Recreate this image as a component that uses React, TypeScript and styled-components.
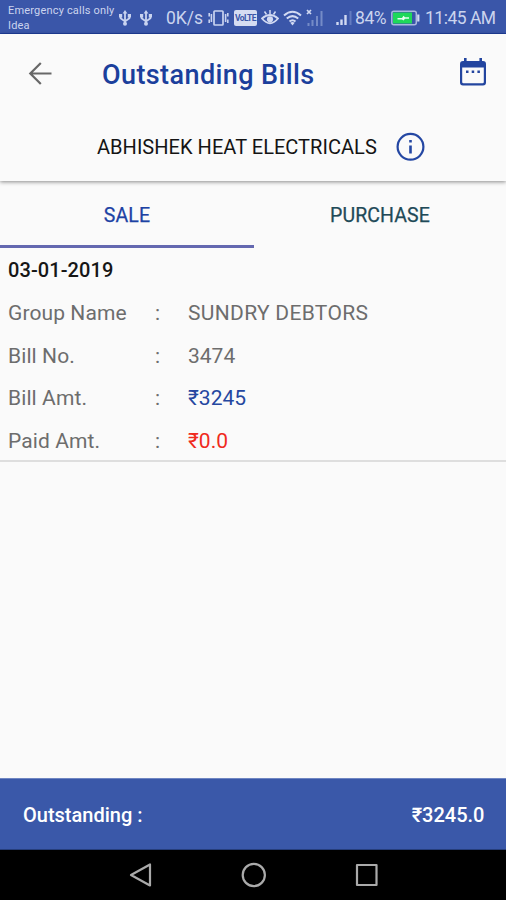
import React from "react";
import styled, { createGlobalStyle } from "styled-components";

const GlobalStyle = createGlobalStyle`
  * { box-sizing: border-box; }
  body { margin: 0; background: #fafafa; font-family: Roboto, "Liberation Sans", sans-serif; }
`;

const Screen = styled.div`
  width: 506px;
  height: 900px;
  display: flex;
  flex-direction: column;
  overflow: hidden;
  background: #fafafa;
`;

const StatusBar = styled.header`
  flex: none;
  height: 34px;
  display: flex;
  align-items: center;
  padding-left: 8px;
  background: #3a56a9;
  border-bottom: 1px solid #1f3f9d;
  color: #cbd4ee;
`;

const Carrier = styled.div`
  width: 111px;
  flex: none;
  padding-top: 2px;
  font-size: 11px;
  line-height: 15px;
  letter-spacing: 0.18px;
  white-space: nowrap;
`;

const StatusItem = styled.div<{ $w: number; $gap?: number }>`
  flex: none;
  width: ${(p) => p.$w}px;
  margin-left: ${(p) => p.$gap ?? 0}px;
  padding-top: 2px;
  display: flex;
  svg { display: block; }
`;

const StatusText = styled.div<{ $w: number; $gap: number; $track?: number }>`
  flex: none;
  width: ${(p) => p.$w}px;
  margin-left: ${(p) => p.$gap}px;
  padding-top: 2px;
  font-size: 17.5px;
  letter-spacing: ${(p) => p.$track ?? 0}px;
  line-height: 22px;
  white-space: nowrap;
`;

const AppBar = styled.div`
  flex: none;
  height: 147px;
  background: #fafafa;
  box-shadow: 0 1px 4px rgba(0, 0, 0, 0.45);
`;

const TitleRow = styled.div`
  height: 80px;
  display: flex;
  align-items: center;
  padding: 0 18px 0 26px;
`;

const IconButton = styled.button<{ $lift?: number }>`
  flex: none;
  border: 0;
  padding: 0;
  margin-bottom: ${(p) => p.$lift ?? 0}px;
  background: none;
  display: flex;
`;

const Title = styled.h1`
  flex: 1;
  margin: 2px 0 0 48px;
  font-size: 27px;
  font-weight: 500;
  line-height: 32px;
  letter-spacing: 0.4px;
  color: #1b3f9c;
`;

const PartyRow = styled.div`
  height: 66px;
  display: flex;
  align-items: center;
  padding-left: 97px;
`;

const PartyName = styled.span`
  width: 297px;
  font-size: 20px;
  line-height: 24px;
  letter-spacing: 0.04px;
  color: #141414;
  white-space: nowrap;
`;

const Tabs = styled.nav`
  flex: none;
  height: 67px;
  display: grid;
  grid-template-columns: 254px 252px;
`;

const Tab = styled.div<{ $active?: boolean }>`
  display: flex;
  align-items: center;
  justify-content: center;
  border-bottom: 3px solid ${(p) => (p.$active ? "#6468b0" : "transparent")};
  padding-top: 4px;
  font-size: 19.5px;
  letter-spacing: 0.1px;
  color: ${(p) => (p.$active ? "#1d42a4" : "#1f4a58")};
  -webkit-text-stroke: 0.25px currentColor;
`;

const Bill = styled.section`
  flex: none;
  height: 214px;
  padding: 1px 8px 0;
  border-bottom: 2px solid #dedede;
`;

const BillDate = styled.div`
  height: 43px;
  line-height: 43px;
  font-size: 20px;
  font-weight: 500;
  letter-spacing: 0.08px;
  color: #161616;
`;

const Field = styled.div`
  height: 42.6px;
  display: grid;
  grid-template-columns: 147px 33px 1fr;
  line-height: 42px;
  font-size: 21px;
  color: #6d6d6d;
`;

const Label = styled.span`
  letter-spacing: 0.1px;
`;

const Value = styled.span<{ $color?: string; $track?: number }>`
  color: ${(p) => p.$color ?? "inherit"};
  letter-spacing: ${(p) => p.$track ?? 0}px;
`;

const Space = styled.div`
  flex: 1;
`;

const Total = styled.footer`
  flex: none;
  height: 72px;
  display: flex;
  align-items: center;
  justify-content: space-between;
  padding: 1px 21.5px 0 23px;
  background: #3a58a9;
  border-top: 1px solid #6f86c2;
  border-bottom: 1px solid #263e7c;
  color: #fff;
  font-size: 20px;
  font-weight: 500;
`;

const NavBar = styled.nav`
  flex: none;
  height: 50px;
  display: flex;
  justify-content: center;
  align-items: center;
  gap: 88px;
  padding-left: 2px;
  background: #000;
`;

const Usb = () => (
  <svg width="12" height="16" viewBox="0 0 12 16" fill="none" stroke="#c9d3f0" strokeWidth="1.8">
    <path d="M6 2v12M1.6 5v3.2L6 11.4l4.4-3.2V5" />
    <path d="M6 0l2.4 3.4H3.6z" fill="#c9d3f0" stroke="none" />
    <circle cx="6" cy="13.8" r="2" fill="#c9d3f0" stroke="none" />
    <path d="M0 4h3.2v3.4H0zM8.8 4H12v3.4H8.8z" fill="#c9d3f0" stroke="none" />
  </svg>
);

const Vibrate = () => (
  <svg width="21" height="16" viewBox="0 0 21 16" fill="none" stroke="#c9d3f0" strokeWidth="1.7">
    <rect x="6" y="1" width="9" height="14" rx="0.8" />
    <path d="M3.4 4v8M1.2 3v3.4M1.2 9.600v3.400M17.600 4v8M19.800 3v3.400M19.800 9.600v3.400" strokeWidth="1.6" />
  </svg>
);

const Badge = styled.span`
  width: 23px;
  height: 16px;
  border-radius: 2px;
  background: #d5dcf2;
  color: #3a56a9;
  font-size: 8.5px;
  font-weight: 700;
  line-height: 16px;
  letter-spacing: -0.6px;
  text-align: center;
`;

const Eye = () => (
  <svg width="18" height="17" viewBox="0 0 18 17" fill="none" stroke="#d2daf3" strokeWidth="1.8">
    <path d="M1 9.5Q9 2.500 17 9.500Q9 19 1 9.500z" />
    <circle cx="9" cy="10.3" r="3.1" fill="#d2daf3" stroke="none" />
    <path d="M9 1v4M3.500 2.500l2 3M14.500 2.500l-2 3" strokeWidth="1.5" />
  </svg>
);

const Wifi = () => (
  <svg width="19" height="16" viewBox="0 0 19 16" fill="none" stroke="#d2daf3" strokeWidth="2">
    <path d="M1 5.500Q9.500-2 18 5.500M3.800 8.600Q9.500 3.600 15.200 8.600M6.500 11.500Q9.500 9 12.500 11.500" />
    <path d="M9.500 15.500l-2.200-2.700q2.200-1.600 4.400 0z" fill="#d2daf3" stroke="none" />
  </svg>
);

const NoSignal = () => (
  <svg width="18" height="18" viewBox="0 0 18 18" fill="none">
    <path d="M1 1l4 4M5 1L1 5" stroke="#d2daf3" strokeWidth="1.7" />
    <path d="M2.500 17v-3M6.500 17v-6M11 17V7M15.500 17V2" stroke="#758bc7" strokeWidth="2" />
  </svg>
);

const Signal = () => (
  <svg width="17" height="16" viewBox="0 0 17 16" fill="none" strokeWidth="2.4">
    <path d="M1.500 15v-3M5.500 15V9.500M9.500 15V5" stroke="#d2daf3" />
    <path d="M14.500 15V1" stroke="#647cc0" strokeWidth="2" />
  </svg>
);

const Battery = () => (
  <svg width="29" height="16" viewBox="0 0 29 16" fill="none">
    <rect x="0.8" y="1.3" width="24.5" height="13.4" rx="2" stroke="#a9b7df" strokeWidth="1.5" />
    <rect x="2" y="2.5" width="19" height="11" fill="#1ed85a" />
    <path d="M6.500 8h4.500l1.500-2.200 1.500 1.400h4v1.600h-4l-1.500 1.800-1.500-1.200H6.500z" fill="#e5fff0" />
    <path d="M27.300 4.500v7" stroke="#d2daf3" strokeWidth="2.2" />
  </svg>
);

const fields = [
  { label: "Group Name", value: "SUNDRY DEBTORS", track: 0.32 },
  { label: "Bill No.", value: "3474" },
  { label: "Bill Amt.", value: "₹3245", color: "#2547a0" },
  { label: "Paid Amt.", value: "₹0.0", color: "#f02a1d" },
];

export default function App() {
  return (
    <Screen>
      <GlobalStyle />
      <StatusBar>
        <Carrier>Emergency calls only<br />Idea</Carrier>
        <StatusItem $w={12}><Usb /></StatusItem>
        <StatusItem $w={12} $gap={9}><Usb /></StatusItem>
        <StatusText $w={38} $gap={14}>0K/s</StatusText>
        <StatusItem $w={21} $gap={4}><Vibrate /></StatusItem>
        <StatusItem $w={23} $gap={5}><Badge>VoLTE</Badge></StatusItem>
        <StatusItem $w={18} $gap={4}><Eye /></StatusItem>
        <StatusItem $w={19} $gap={4}><Wifi /></StatusItem>
        <StatusItem $w={18} $gap={4}><NoSignal /></StatusItem>
        <StatusItem $w={17} $gap={12}><Signal /></StatusItem>
        <StatusText $w={34} $gap={2} $track={-0.4}>84%</StatusText>
        <StatusItem $w={29} $gap={2}><Battery /></StatusItem>
        <StatusText $w={76} $gap={5} $track={-0.5}>11:45 AM</StatusText>
      </StatusBar>

      <AppBar>
        <TitleRow>
          <IconButton aria-label="Back">
            <svg width="28" height="28" viewBox="0 0 28 28" fill="none" stroke="#686868" strokeWidth="2.2">
              <path d="M25.500 13.500H4.500M14.800 3L4.300 13.500 14.800 24" />
            </svg>
          </IconButton>
          <Title>Outstanding Bills</Title>
          <IconButton aria-label="Pick date" $lift={4}>
            <svg width="30" height="30" viewBox="0 0 30 30">
              <path fill="#23459f" fillRule="evenodd" d="M6 1h2.600v3h12.800V1H24v3h1q3 0 3 3v18.500q0 3-3 3H5q-3 0-3-3V7q0-3 3-3h1zM4.200 10.500V25q0 1.300 1.300 1.300h19q1.300 0 1.300-1.300V10.500z" />
              <path fill="#23459f" d="M8 13.500h2.500V16H8zM13.700 13.500h2.500V16h-2.500zM19.400 13.500h2.500V16h-2.500z" />
            </svg>
          </IconButton>
        </TitleRow>
        <PartyRow>
          <PartyName>ABHISHEK HEAT ELECTRICALS</PartyName>
          <IconButton aria-label="Information">
            <svg width="32" height="32" viewBox="0 0 32 32" fill="none" stroke="#2447a3" strokeWidth="2.2">
              <circle cx="16.500" cy="15.800" r="12.900" />
              <path d="M16.500 14.500v8M16.500 9v2.600" strokeWidth="2.6" />
            </svg>
          </IconButton>
        </PartyRow>
      </AppBar>

      <Tabs>
        <Tab $active>SALE</Tab>
        <Tab>PURCHASE</Tab>
      </Tabs>

      <Bill>
        <BillDate>03-01-2019</BillDate>
        {fields.map((f) => (
          <Field key={f.label}>
            <Label>{f.label}</Label>
            <span>:</span>
            <Value $color={f.color} $track={f.track}>{f.value}</Value>
          </Field>
        ))}
      </Bill>

      <Space />

      <Total>
        <span>Outstanding :</span>
        <span>₹3245.0</span>
      </Total>
      <NavBar>
        <svg width="24" height="26" viewBox="0 0 24 26" fill="none" stroke="#aaa" strokeWidth="2.2" strokeLinejoin="round">
          <path d="M21 2.500v21L2 13z" />
        </svg>
        <svg width="26" height="26" viewBox="0 0 26 26" fill="none" stroke="#aaa" strokeWidth="2.2">
          <circle cx="12.800" cy="13" r="11.100" />
        </svg>
        <svg width="24" height="26" viewBox="0 0 24 26" fill="none" stroke="#aaa" strokeWidth="2.2" strokeLinejoin="round">
          <rect x="2" y="3" width="19.500" height="20" />
        </svg>
      </NavBar>
    </Screen>
  );
}
